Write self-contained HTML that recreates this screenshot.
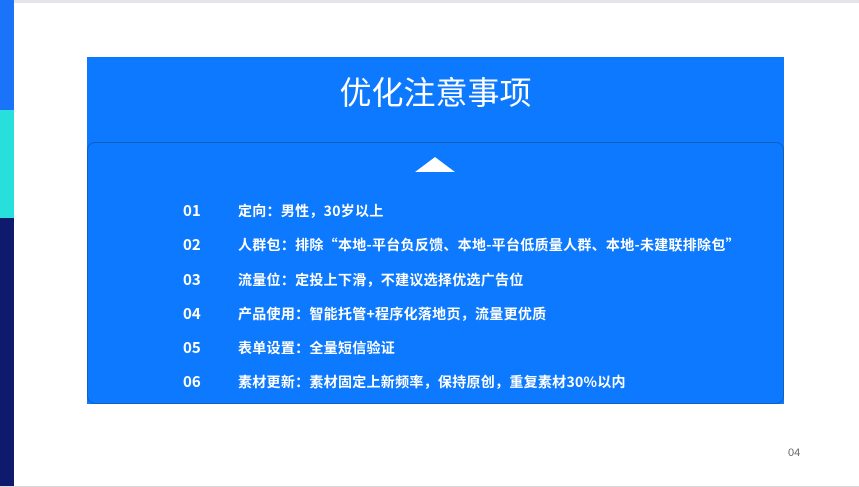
<!DOCTYPE html>
<html><head><meta charset="utf-8"><style>
html,body{margin:0;padding:0;width:859px;height:487px;overflow:hidden;background:#fff;position:relative;font-family:"Noto Sans CJK SC","Liberation Sans",sans-serif}
.top{position:absolute;left:0;top:0;width:859px;height:3px;background:#e4e5e8}
.s1{position:absolute;left:0;top:0;width:14px;height:110px;background:#1a73f8}
.s2{position:absolute;left:0;top:110px;width:14px;height:108px;background:#27e0dc}
.s3{position:absolute;left:0;top:218px;width:14px;height:269px;background:#0d1a6e}
.bl{position:absolute;left:0;top:486px;width:859px;height:1px;background:#d8d8d8}
.panel{position:absolute;left:87px;top:57px;width:697px;height:347px;background:#0c79fe}
.title{position:absolute;left:87px;top:70px;width:697px;text-align:center;color:#fff;font-size:32px;line-height:42px}
.box{position:absolute;left:87px;top:142px;width:695px;height:260px;border:1px solid #1060c0;border-radius:8px;background:#0c79fe}
.tri{position:absolute;left:415px;top:157px;width:0;height:0;border-left:20px solid transparent;border-right:20px solid transparent;border-bottom:15px solid #fff}
.row{position:absolute;color:#fff;font-weight:bold;font-size:14px;line-height:18px;white-space:nowrap}
.n{left:183px;font-size:15px}
.t{left:238px;letter-spacing:0.28px}
.pg{position:absolute;left:788px;top:447px;color:#666;font-size:11px;font-family:"Liberation Sans",sans-serif}
</style></head><body>
<div class="top"></div><div class="s1"></div><div class="s2"></div><div class="s3"></div><div class="bl"></div>
<div class="panel"></div>
<div class="title">优化注意事项</div>
<div class="box"></div>
<div class="tri"></div>
<div class="row n" style="top:202px">01</div><div class="row t" style="top:202px">定向：男性，30岁以上</div>
<div class="row n" style="top:236px">02</div><div class="row t" style="top:236px">人群包：排除“本地-平台负反馈、本地-平台低质量人群、本地-未建联排除包”</div>
<div class="row n" style="top:271px">03</div><div class="row t" style="top:271px">流量位：定投上下滑，不建议选择优选广告位</div>
<div class="row n" style="top:305px">04</div><div class="row t" style="top:305px">产品使用：智能托管+程序化落地页，流量更优质</div>
<div class="row n" style="top:339px">05</div><div class="row t" style="top:339px">表单设置：全量短信验证</div>
<div class="row n" style="top:373px">06</div><div class="row t" style="top:373px">素材更新：素材固定上新频率，保持原创，重复素材30%以内</div>
<div class="pg">04</div>
</body></html>
